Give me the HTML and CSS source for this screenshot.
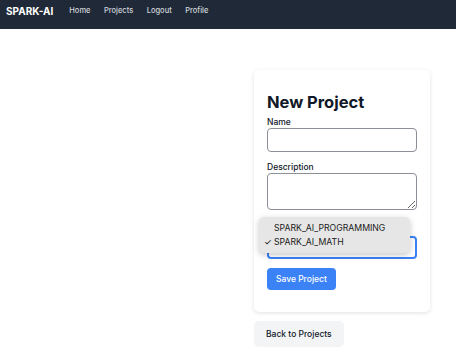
FILE: index.html
```html
<!DOCTYPE html>
<html lang="en">
<head>
    <meta charset="UTF-8">
    <meta name="viewport" content="width=device-width, initial-scale=1.0">
    <title>New Project - SPARK-AI</title>
    <link rel="stylesheet" href="styles.css">
</head>
<body>
    <nav class="navbar">
        <span class="brand">SPARK-AI</span>
        <a href="#" class="nav-link">Home</a>
        <a href="#" class="nav-link">Projects</a>
        <a href="#" class="nav-link">Logout</a>
        <a href="#" class="nav-link">Profile</a>
    </nav>
    <main class="page">
        <div class="spacer"></div>
        <div class="column">
            <div class="card">
                <h1>New Project</h1>
                <div class="form-group">
                    <label for="name">Name</label>
                    <input type="text" id="name">
                </div>
                <div class="form-group">
                    <label for="description">Description</label>
                    <textarea id="description"></textarea>
                </div>
                <div class="form-group select-group">
                    <div class="select-box"></div>
                    <!-- open dropdown list -->
                    <ul class="dropdown">
                        <li>SPARK_AI_PROGRAMMING</li>
                        <li class="checked">SPARK_AI_MATH</li>
                    </ul>
                </div>
                <button class="btn-primary">Save Project</button>
            </div>
            <button class="btn-secondary">Back to Projects</button>
        </div>
    </main>
</body>
</html>
```

FILE: styles.css
```css
body {
    font-family: Inter, "Noto Sans", sans-serif;
    margin: 0;
    padding: 0;
    background-color: #ffffff;
    color: #111827;
}
.navbar {
    background-color: #1f2937;
    height: 29px;
    display: flex;
    align-items: flex-start;
    padding: 5px 6px 0;
    box-sizing: border-box;
}
.brand {
    color: white;
    font-weight: 700;
    font-size: 10px;
    line-height: 12px;
    margin-right: 16px;
}
.nav-link {
    color: #d1d5db;
    text-decoration: none;
    font-size: 7.5px;
    font-weight: 500;
    line-height: 12px;
    margin-right: 13.5px;
}
.page {
    display: flex;
    padding: 41px 26px 0 0;
}
.spacer {
    flex: 1;
}
.column {
    width: 176px;
}
.card {
    background: white;
    border-radius: 5px;
    box-shadow: 0 1px 4px rgba(0, 0, 0, 0.12);
    padding: 21px 13px 22px;
}
.card h1 {
    font-size: 16.5px;
    font-weight: 700;
    line-height: 22px;
    margin: 0 0 3px;
}
.form-group {
    margin-bottom: 9px;
}
.form-group label {
    display: block;
    font-size: 8.5px;
    font-weight: 500;
    line-height: 12px;
}
.form-group input,
.form-group textarea,
.select-box {
    display: block;
    width: 100%;
    box-sizing: border-box;
    border: 1px solid #8b8f97;
    border-radius: 4px;
    margin: 0;
    font-family: inherit;
}
.form-group input {
    height: 24px;
}
.form-group textarea {
    height: 37px;
    resize: vertical;
}
.select-group {
    position: relative;
    padding-top: 17px;
    margin-bottom: 7px;
}
.select-box {
    height: 23px;
    border: 2px solid #3b82f6;
}
.dropdown {
    position: absolute;
    left: -8px;
    top: -2px;
    width: 151px;
    margin: 0;
    padding: 4px 0;
    list-style: none;
    background: #e6e6e6;
    border-radius: 5px;
    box-shadow: 0 2px 6px rgba(0, 0, 0, 0.22);
    font-size: 8.7px;
    color: #1a1a1a;
    box-sizing: border-box;
}
.dropdown li {
    padding-left: 15px;
    line-height: 14px;
    position: relative;
}
.dropdown li.checked::before {
    content: "\2713";
    position: absolute;
    left: 5px;
}
.btn-primary {
    background-color: #3b82f6;
    color: white;
    border: none;
    border-radius: 4px;
    font-family: inherit;
    font-size: 8.5px;
    font-weight: 500;
    height: 22px;
    padding: 0 9px;
}
.btn-secondary {
    margin-top: 9px;
    background-color: #f3f4f6;
    color: #111827;
    border: none;
    border-radius: 5px;
    font-family: inherit;
    font-size: 8.5px;
    font-weight: 500;
    height: 26px;
    padding: 0 12px;
}
```
